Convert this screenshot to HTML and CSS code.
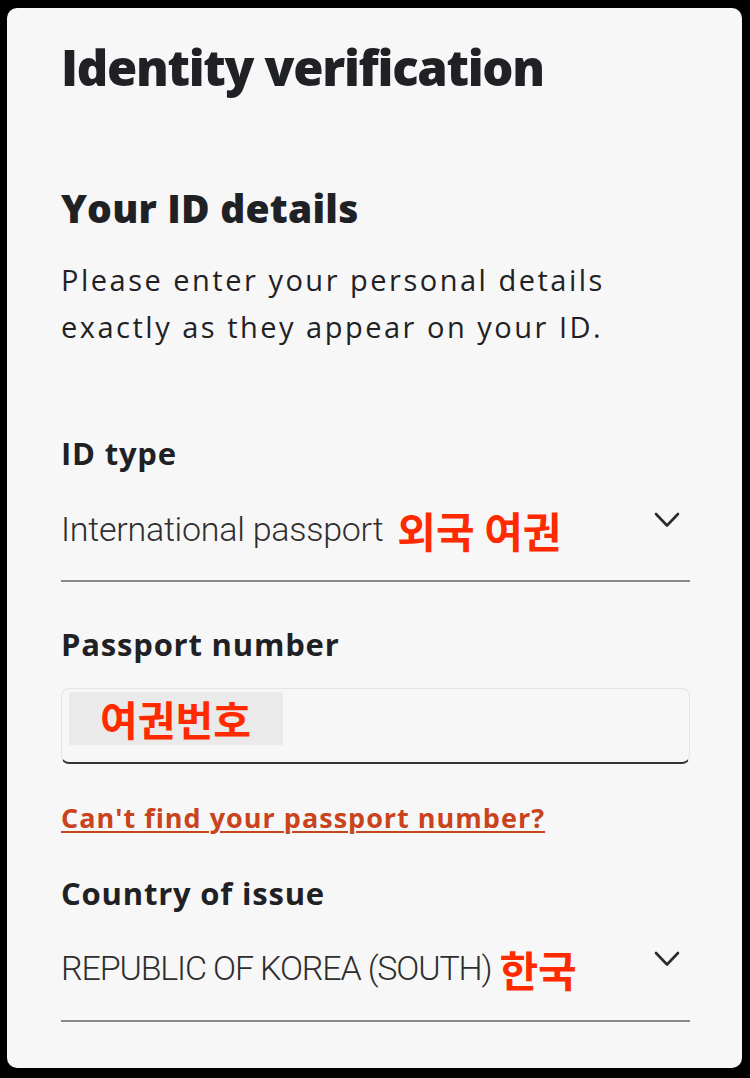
FILE: index.html
```html
<!DOCTYPE html>
<html>
<head>
    <title>Identity verification</title>
    <link rel="stylesheet" href="styles.css">
</head>
<body>
    <div class="panel">
        <h1>Identity verification</h1>

        <h2>Your ID details</h2>
        <p class="intro">Please enter your personal details exactly as they appear on your ID.</p>

        <!-- ID type -->
        <div class="label label-first">ID type</div>
        <div class="select">
            <span class="value">International passport</span>
            <span class="note">외국 여권</span>
            <svg class="chevron" width="26" height="16" viewBox="0 0 26 16">
                <path d="M2 2 L13 13.5 L24 2" fill="none" stroke="#2b2b2b" stroke-width="2.6" stroke-linecap="round" stroke-linejoin="round"/>
            </svg>
        </div>

        <!-- Passport number -->
        <div class="label">Passport number</div>
        <div class="input">
            <span class="input-note">여권번호</span>
        </div>
        <div class="help-row">
            <a class="help" href="#">Can't find your passport number?</a>
        </div>

        <!-- Country of issue -->
        <div class="label label-country">Country of issue</div>
        <div class="select select-country">
            <span class="value caps">REPUBLIC OF KOREA (SOUTH)</span>
            <span class="note note-tight">한국</span>
            <svg class="chevron" width="26" height="16" viewBox="0 0 26 16">
                <path d="M2 2 L13 13.5 L24 2" fill="none" stroke="#2b2b2b" stroke-width="2.6" stroke-linecap="round" stroke-linejoin="round"/>
            </svg>
        </div>
    </div>
</body>
</html>
```

FILE: styles.css
```css
html, body {
    margin: 0;
    background: #000;
}
body {
    padding: 8px 8px 10px 7px;
    font-family: "Open Sans", "Noto Sans CJK KR", sans-serif;
    color: #1f2124;
}
.panel {
    background: #f7f7f7;
    border-radius: 10px;
    height: 1060px;
    box-sizing: border-box;
    padding: 29px 52px 0 54px;
    overflow: hidden;
}
h1 {
    margin: 0;
    font-size: 49px;
    font-weight: 800;
    line-height: 60px;
    letter-spacing: -1.3px;
}
h2 {
    margin: 89px 0 0;
    font-size: 39px;
    font-weight: 800;
    line-height: 44px;
    letter-spacing: 0.2px;
}
.intro {
    margin: 26px 0 0;
    font-size: 29px;
    line-height: 47px;
    letter-spacing: 2.5px;
    max-width: 610px;
}
.label {
    font-size: 31px;
    font-weight: 700;
    line-height: 36px;
    letter-spacing: 0.8px;
    margin-top: 44px;
}
.label-first {
    margin-top: 85px;
}
.label-country {
    margin-top: 40px;
}
.select {
    display: flex;
    align-items: flex-start;
    margin-top: 38px;
    height: 73px;
    box-sizing: border-box;
    border-bottom: 2px solid #8a8a8a;
}
.select-country {
    margin-top: 37px;
    height: 74px;
}
.value {
    font-family: Roboto, sans-serif;
    font-weight: 300;
    font-size: 34px;
    line-height: 40px;
    letter-spacing: -0.25px;
    color: #2e2e2e;
}
.value.caps {
    letter-spacing: -1.15px;
}
.note {
    font-family: "Noto Sans CJK KR", sans-serif;
    font-weight: 700;
    font-size: 42px;
    line-height: 42px;
    color: #ff2a00;
    margin-left: 14px;
}
.note-tight {
    margin-left: 8px;
}
.chevron {
    margin-left: auto;
    margin-right: 10px;
    margin-top: 3px;
}
.input {
    margin-top: 26px;
    height: 76px;
    box-sizing: border-box;
    border: 1px solid #e4e4e4;
    border-bottom: 2px solid #333;
    border-radius: 8px;
    padding: 3px 7px;
}
.input-note {
    display: block;
    background: #eaeaea;
    width: 214px;
    height: 53px;
    line-height: 53px;
    padding-left: 31px;
    box-sizing: border-box;
    font-family: "Noto Sans CJK KR", sans-serif;
    font-weight: 700;
    font-size: 41px;
    color: #ff2a00;
}
.help-row {
    margin-top: 37px;
    font-size: 27px;
    line-height: 34px;
}
.help {
    font-weight: 700;
    letter-spacing: 1px;
    color: #c9431d;
    text-decoration: underline;
    text-underline-offset: 3px;
    text-decoration-thickness: 2px;
}
```
